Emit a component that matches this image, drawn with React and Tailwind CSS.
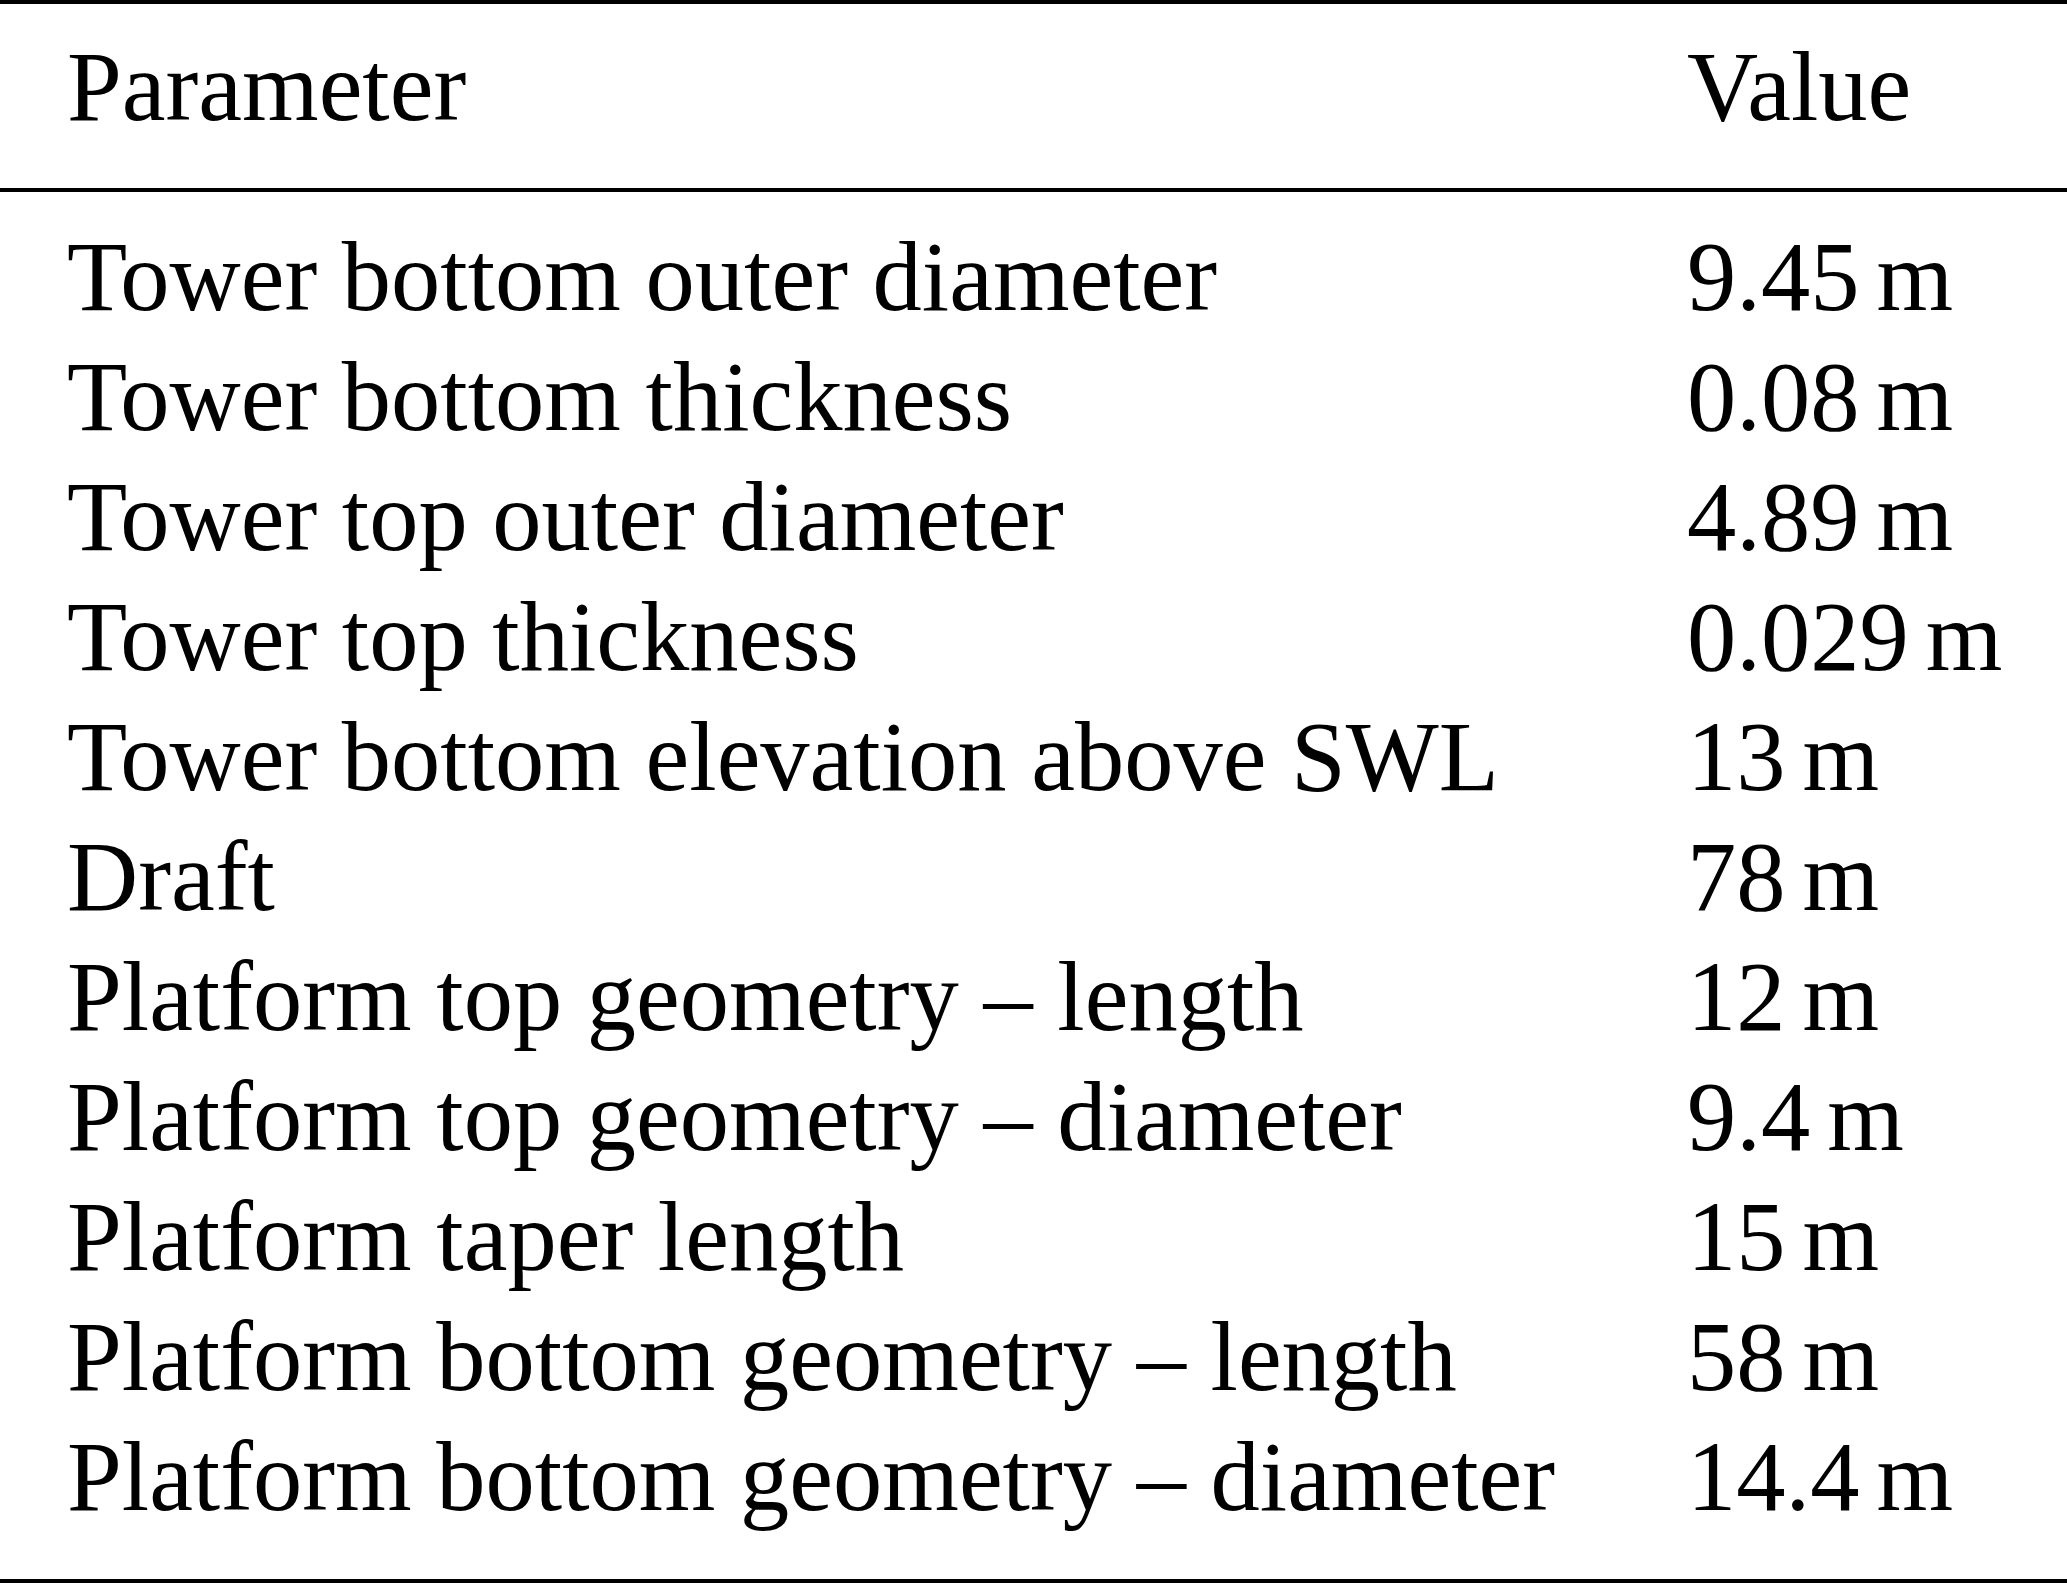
const rows = [
  ['Tower bottom outer diameter', '9.45'],
  ['Tower bottom thickness', '0.08'],
  ['Tower top outer diameter', '4.89'],
  ['Tower top thickness', '0.029'],
  ['Tower bottom elevation above SWL', '13'],
  ['Draft', '78'],
  ['Platform top geometry – length', '12'],
  ['Platform top geometry – diameter', '9.4'],
  ['Platform taper length', '15'],
  ['Platform bottom geometry – length', '58'],
  ['Platform bottom geometry – diameter', '14.4'],
]

export default function App() {
  return (
    <div className="w-[2067px] min-h-[1584px] bg-white text-black font-['Liberation_Serif','Times_New_Roman',serif] text-[98.5px] leading-[120px]">
      <div className="border-t-4 border-black" />
      <div className="grid grid-cols-[1620px_1fr] px-[67px] pt-[23px] pb-[41px]">
        <div>Parameter</div>
        <div>Value</div>
      </div>
      <div className="border-t-4 border-black" />
      <div className="flex flex-col pt-[25px] pb-[42px]">
        {rows.map(([name, value]) => (
          <div key={name} className="grid grid-cols-[1620px_1fr] px-[67px] whitespace-nowrap">
            <div>{name}</div>
            <div>
              {value}
              <span className="ml-[17px]">m</span>
            </div>
          </div>
        ))}
      </div>
      <div className="border-t-4 border-black" />
    </div>
  )
}
